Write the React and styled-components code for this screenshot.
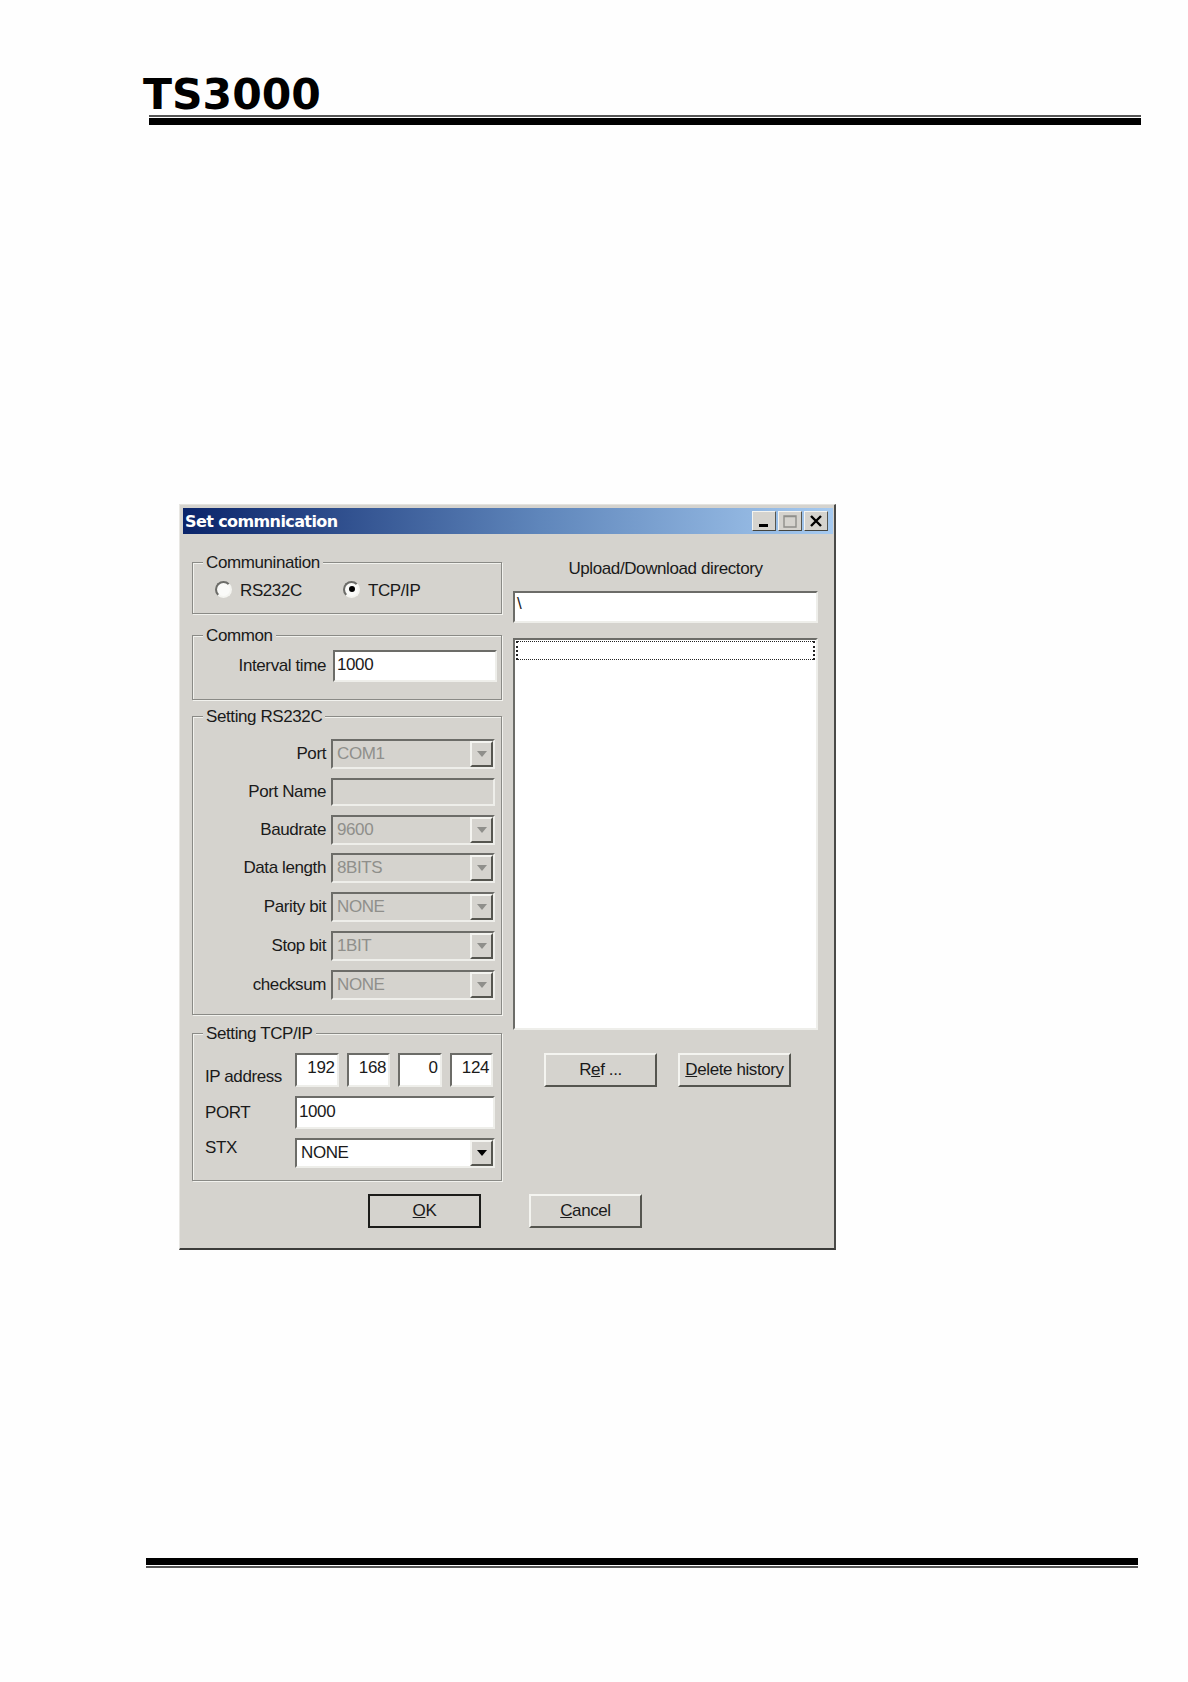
import styled, { createGlobalStyle } from "styled-components"

const Global = createGlobalStyle`
  html, body {
    margin: 0;
    padding: 0;
    background: #fefefe;
  }
`
const Page = styled.div`
  width: 1188px;
  height: 1682px;
  overflow: hidden;
  box-sizing: border-box;
  padding-top: 79px;
`
const Logo = styled.div`
  margin-left: 143px;
  height: 31px;
  line-height: 31px;
  font-family: "DejaVu Sans", sans-serif;
  font-weight: 700;
  font-size: 42.5px;
  color: #000;
`
const TopRule = styled.div`
  margin: 5px 0 0 149px;
  width: 992px;
  height: 10px;
  box-sizing: border-box;
  border-top: 2px solid #555;
  border-bottom: 7px solid #000;
`
const BottomRule = styled.div`
  margin: 308px 0 0 146px;
  width: 992px;
  height: 10px;
  box-sizing: border-box;
  border-top: 7px solid #000;
  border-bottom: 2px solid #555;
`
const Win = styled.div`
  margin: 379px 0 0 179px;
  width: 657px;
  height: 746px;
  box-sizing: border-box;
  padding: 3px 1px 0 3px;
  background: #d5d3ce;
  border-style: solid;
  border-width: 1px 2px 2px 1px;
  border-color: #e4e3df #4a4a48 #3c3c3a #e8e7e3;
  font-family: "Liberation Sans", Arial, sans-serif;
  font-size: 17px;
  letter-spacing: -0.4px;
  color: #1a1a1a;
`
const TitleBar = styled.div`
  height: 26px;
  display: flex;
  align-items: center;
  justify-content: space-between;
  padding: 0 5px 0 2px;
  background: linear-gradient(90deg, #0a246a 0%, #5f86bb 55%, #a6caf0 100%);
`
const Title = styled.span`
  font-family: "DejaVu Sans", sans-serif;
  font-weight: 700;
  font-size: 16px;
  letter-spacing: -0.6px;
  color: #fff;
`
const TitleButtons = styled.div`
  display: flex;
  gap: 2px;
`
const TitleButton = styled.div`
  width: 24px;
  height: 20px;
  box-sizing: border-box;
  display: flex;
  align-items: center;
  justify-content: center;
  background: #d5d3ce;
  border: 1px solid;
  border-color: #f4f4f0 #55554f #44443f #f4f4f0;
`
const Body = styled.div`
  display: flex;
  gap: 11px;
  padding: 28px 0 0 9px;
`
const LeftCol = styled.div`
  width: 310px;
  display: flex;
  flex-direction: column;
`
const RightCol = styled.div`
  width: 305px;
  margin-top: -3px;
  display: flex;
  flex-direction: column;
`
const Group = styled.div`
  position: relative;
  box-sizing: border-box;
  height: ${p => p.$height}px;
  margin-bottom: ${p => p.$after || 0}px;
  padding: ${p => p.$pad};
  border: 1px solid #8a8a86;
  box-shadow: 1px 1px 0 #f2f2ee, inset 1px 1px 0 #f2f2ee;
`
const Legend = styled.span`
  position: absolute;
  top: -10px;
  left: 10px;
  padding: 0 3px;
  line-height: 20px;
  background: #d5d3ce;
`
const RadioRow = styled.div`
  display: flex;
  align-items: center;
  height: 100%;
  padding-top: 2px;
  box-sizing: border-box;
`
const RadioOption = styled.div`
  width: 128px;
  display: flex;
  align-items: center;
  gap: 8px;
`
const RadioLabel = styled.span`
  margin-top: 3px;
`
const RadioCircle = styled.div`
  position: relative;
  width: 17px;
  height: 17px;
  box-sizing: border-box;
  border-radius: 50%;
  background: #fafaf8;
  border: 2px solid;
  border-color: #6c6c68 #f4f4f0 #f4f4f0 #6c6c68;

  &::after {
    content: "";
    display: ${p => (p.$checked ? "block" : "none")};
    position: absolute;
    top: 3.5px;
    left: 3.5px;
    width: 6px;
    height: 6px;
    border-radius: 50%;
    background: #000;
  }
`
const FieldRow = styled.div`
  display: flex;
  align-items: center;
  gap: ${p => p.$gap}px;
`
const FieldLabel = styled.span`
  width: 133px;
  padding-right: 1px;
  text-align: right;
  white-space: nowrap;
`
const Stack = styled.div`
  display: flex;
  flex-direction: column;
  gap: 8.75px;
`
const Sunken = styled.div`
  box-sizing: border-box;
  width: ${p => p.$width || "100%"};
  height: ${p => p.$height}px;
  flex: ${p => p.$flex || "none"};
  display: flex;
  align-items: center;
  padding: 0 ${p => (p.$right ? 2 : 3)}px ${p => p.$lift || 0}px 2px;
  justify-content: ${p => (p.$right ? "flex-end" : "flex-start")};
  background: ${p => (p.$disabled ? "#d5d3ce" : "#fff")};
  border: 2px solid;
  border-color: #6c6c68 #eeeeea #eeeeea #6c6c68;
`
const ComboBox = styled.div`
  box-sizing: border-box;
  width: ${p => p.$width}px;
  height: 30px;
  display: flex;
  align-items: center;
  justify-content: space-between;
  padding-left: 4px;
  background: ${p => (p.$disabled ? "#d5d3ce" : "#fff")};
  color: ${p => (p.$disabled ? "#8f8f8b" : "#1a1a1a")};
  border: 2px solid;
  border-color: #6c6c68 #eeeeea #eeeeea #6c6c68;
`
const ComboArrow = styled.div`
  width: 23px;
  height: 26px;
  box-sizing: border-box;
  display: flex;
  align-items: center;
  justify-content: center;
  background: #d5d3ce;
  border: 2px solid;
  border-color: #f4f4f0 #55554f #55554f #f4f4f0;

  &::after {
    content: "";
    border-left: 5px solid transparent;
    border-right: 5px solid transparent;
    border-top: 6px solid ${p => (p.$disabled ? "#8f8f8b" : "#000")};
  }
`
const TcpGrid = styled.div`
  display: grid;
  grid-template-columns: 90px 200px;
  grid-template-rows: 34px 33px 30px;
  row-gap: 9px;
`
const TcpLabel = styled.span`
  align-self: ${p => p.$align};
  line-height: 20px;
`
const IpRow = styled.div`
  display: flex;
  gap: 8px;
  width: 198px;
`
const FooterRow = styled.div`
  display: flex;
  gap: 48px;
  padding-left: 185px;
  margin-top: 13px;
`
const Button = styled.div`
  width: 113px;
  height: 34px;
  box-sizing: border-box;
  display: flex;
  align-items: center;
  justify-content: center;
  background: #d5d3ce;
  border: ${p => (p.$primary ? "2px solid #1c1c1a" : "2px solid")};
  ${p => !p.$primary && "border-color: #f4f4f0 #55554f #55554f #f4f4f0;"}
`
const DirLabel = styled.div`
  height: 32px;
  line-height: 20px;
  text-align: center;
`
const ListBox = styled.div`
  box-sizing: border-box;
  height: 392px;
  margin-top: 15px;
  padding: 1px;
  background: #fff;
  border: 2px solid;
  border-color: #6c6c68 #eeeeea #eeeeea #6c6c68;
`
const FocusRow = styled.div`
  height: 19px;
  box-sizing: border-box;
  border: 2px dotted #222;
  border-width: 1px 2px;
`
const RightButtons = styled.div`
  display: flex;
  gap: 21px;
  margin: 23px 0 0 31px;
`

const serialRows = [
  ["Port", "COM1"],
  ["Port Name", null],
  ["Baudrate", "9600"],
  ["Data length", "8BITS"],
  ["Parity bit", "NONE"],
  ["Stop bit", "1BIT"],
  ["checksum", "NONE"],
]

const App = () => {
  return (
    <Page>
      <Global />
      <Logo>TS3000</Logo>
      <TopRule />
      <Win>
        <TitleBar>
          <Title>Set commnication</Title>
          <TitleButtons>
            <TitleButton>
              <svg width="14" height="14" viewBox="0 0 14 14">
                <rect x="2" y="10" width="9" height="3" fill="#000" />
              </svg>
            </TitleButton>
            <TitleButton>
              <svg width="16" height="15" viewBox="0 0 16 15">
                <path d="M2 2h12v11H2z M2 2.5h12" fill="none" stroke="#8f8f8b" strokeWidth="1.4" />
              </svg>
            </TitleButton>
            <TitleButton>
              <svg width="14" height="14" viewBox="0 0 14 14">
                <path d="M2 2l10 10M12 2L2 12" stroke="#000" strokeWidth="2.4" />
              </svg>
            </TitleButton>
          </TitleButtons>
        </TitleBar>
        <Body>
          <LeftCol>
            <Group $height={52} $after={21} $pad="0 0 0 22px">
              <Legend>Communination</Legend>
              <RadioRow>
                <RadioOption>
                  <RadioCircle />
                  <RadioLabel>RS232C</RadioLabel>
                </RadioOption>
                <RadioOption>
                  <RadioCircle $checked />
                  <RadioLabel>TCP/IP</RadioLabel>
                </RadioOption>
              </RadioRow>
            </Group>
            <Group $height={65} $after={16} $pad="14px 0 0 0">
              <Legend>Common</Legend>
              <FieldRow $gap={6}>
                <FieldLabel>Interval time</FieldLabel>
                <Sunken $width="164px" $height={32} $lift={2}>1000</Sunken>
              </FieldRow>
            </Group>
            <Group $height={299} $after={18} $pad="22px 0 0 0">
              <Legend>Setting RS232C</Legend>
              <Stack>
                {serialRows.map(([label, value]) => (
                  <FieldRow $gap={4} key={label}>
                    <FieldLabel>{label}</FieldLabel>
                    {value ? (
                      <ComboBox $disabled $width={164}>
                        {value}
                        <ComboArrow $disabled />
                      </ComboBox>
                    ) : (
                      <Sunken $disabled $width="164px" $height={28} />
                    )}
                  </FieldRow>
                ))}
              </Stack>
            </Group>
            <Group $height={148} $pad="19px 0 0 12px">
              <Legend>Setting TCP/IP</Legend>
              <TcpGrid>
                <TcpLabel $align="end">IP address</TcpLabel>
                <IpRow>
                  {["192", "168", "0", "124"].map((part, i) => (
                    <Sunken key={i} $right $flex="1" $height={34} $lift={5}>{part}</Sunken>
                  ))}
                </IpRow>
                <TcpLabel $align="center">PORT</TcpLabel>
                <Sunken $height={33} $lift={2}>1000</Sunken>
                <TcpLabel $align="start">STX</TcpLabel>
                <ComboBox $width={200}>
                  NONE
                  <ComboArrow />
                </ComboBox>
              </TcpGrid>
            </Group>
          </LeftCol>
          <RightCol>
            <DirLabel>Upload/Download directory</DirLabel>
            <Sunken $height={32} $lift={6}>\</Sunken>
            <ListBox>
              <FocusRow />
            </ListBox>
            <RightButtons>
              <Button>R<u>e</u>f ...</Button>
              <Button><u>D</u>elete history</Button>
            </RightButtons>
          </RightCol>
        </Body>
        <FooterRow>
          <Button $primary><u>O</u>K</Button>
          <Button><u>C</u>ancel</Button>
        </FooterRow>
      </Win>
      <BottomRule />
    </Page>
  )
}

export default App
